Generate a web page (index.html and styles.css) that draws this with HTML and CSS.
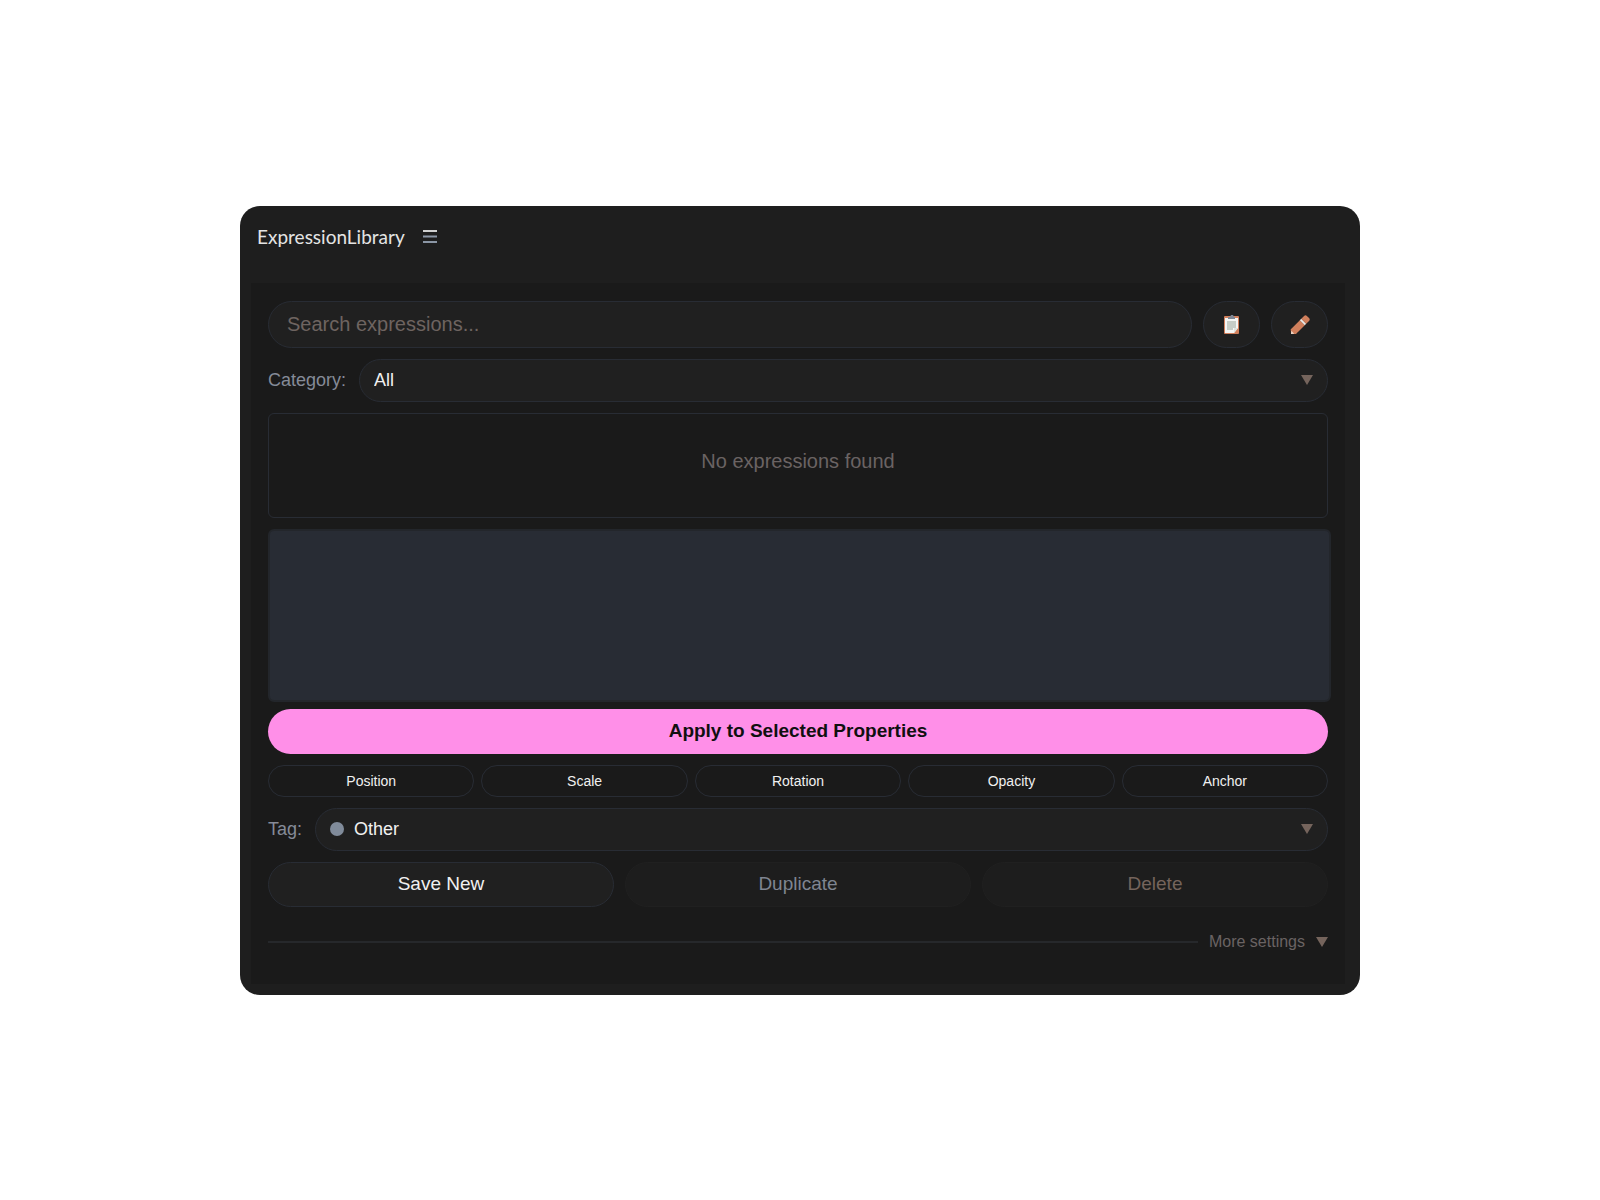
FILE: index.html
```html
<!DOCTYPE html>
<html lang="en">
  <head>
    <meta charset="UTF-8">
    <meta name="viewport" content="width=device-width, initial-scale=1">
    <title>ExpressionLibrary</title>
    <link rel="stylesheet" href="styles.css">
  </head>
  <body>
    <main class="panel">
      <div class="header">
        <h1>ExpressionLibrary</h1>
        <button class="menu-btn" type="button" aria-label="Panel menu">
          <svg width="14" height="14" viewBox="0 0 14 14">
            <path d="M0 2h14" stroke="#d0d0d0" stroke-width="2"/>
            <path d="M0 7.500h14M0 13h14" stroke="#8b96a5" stroke-width="2"/>
          </svg>
        </button>
      </div>

      <div class="content">
        <!-- Search -->
        <div class="row search-row">
          <input class="search" type="text" placeholder="Search expressions..." aria-label="Search expressions">
          <button class="icon-btn" type="button" aria-label="Copy">
            <svg width="16" height="20" viewBox="0 0 16 20">
              <rect x="0" y="2" width="15" height="18" rx="1" fill="#d07f5c"/>
              <path d="M1 4h13v10l-4 5H1z" fill="#f4f6f4"/>
              <path d="M3 7h9v7h-3v2H3z" fill="#c6cdc7"/>
              <path d="M10 19v-5h4z" fill="#dfe4e0"/>
              <path d="M4 3h2l1-2h2l1 2h1v2H4z" fill="#7d8694"/>
            </svg>
          </button>
          <button class="icon-btn" type="button" aria-label="Edit">
            <svg width="20" height="20" viewBox="0 0 20 20">
              <g transform="translate(1 20) rotate(-45)">
                <path d="M0 0l5-3.500v7z" fill="#f0d9c8"/>
                <path d="M3 -3.500h13v7H3L1.500 1.500v-3z" fill="#d07f5c"/>
                <path d="M0 0l2.500-2v4z" fill="#f0d9c8"/>
                <path d="M16 -3.500h2v7h-2z" fill="#f0ebe6"/>
                <path d="M18 -3.500h4q2 0 2 2v3q0 2-2 2h-4z" fill="#d07f5c"/>
              </g>
            </svg>
          </button>
        </div>

        <!-- Category filter -->
        <div class="row select-row">
          <label for="category">Category:</label>
          <div class="select">
            <select id="category">
              <option>All</option>
            </select>
            <span class="arrow"></span>
          </div>
        </div>

        <div class="list">No expressions found</div>

        <!-- Expression code -->
        <textarea class="editor" aria-label="Expression code"></textarea>

        <button class="apply" type="button">Apply to Selected Properties</button>

        <div class="row props">
          <button type="button">Position</button>
          <button type="button">Scale</button>
          <button type="button">Rotation</button>
          <button type="button">Opacity</button>
          <button type="button">Anchor</button>
        </div>

        <div class="row select-row">
          <label for="tag">Tag:</label>
          <div class="select tag">
            <select id="tag">
              <option>Other</option>
            </select>
            <span class="dot"></span>
            <span class="arrow"></span>
          </div>
        </div>

        <div class="row actions">
          <button class="save" type="button">Save New</button>
          <button class="duplicate" type="button" disabled>Duplicate</button>
          <button class="delete" type="button" disabled>Delete</button>
        </div>

        <div class="row more">
          <span class="line"></span>
          <button type="button">More settings <span class="triangle"></span></button>
        </div>
      </div>
    </main>
  </body>
</html>
```
FILE: styles.css
```css
* {
  box-sizing: border-box;
}
body {
  margin: 0;
  min-height: 100vh;
  display: flex;
  align-items: center;
  justify-content: center;
  background: #fff;
  color: #f0f0f0;
  font-family: "Liberation Sans", Arial, sans-serif;
  font-size: 18px;
}
button, input, select, textarea {
  margin: 0;
  font-family: inherit;
  color: inherit;
}
button {
  padding: 0;
  border: 1px solid #282c34;
  background: none;
}
.panel {
  width: 70%;
  padding: 0 15px 11px 11px;
  border-radius: 20px;
  background: #1e1e1e;
}
.header {
  display: flex;
  align-items: center;
  gap: 18px;
  height: 77px;
  padding: 0 6px 16px;
}
.header h1 {
  margin: 0;
  color: #e4e4e4;
  font-family: Lato, sans-serif;
  font-size: 19px;
  font-weight: normal;
}
.menu-btn {
  display: flex;
  border: none;
}
.content {
  display: flex;
  flex-direction: column;
  gap: 11px;
  padding: 18px 17px 31px;
  background: #1a1a1a;
}
.row {
  display: flex;
  align-items: center;
  gap: 11px;
}

/* Search */
.search {
  flex: 1;
  min-width: 0;
  height: 47px;
  padding: 0 18px;
  border: 1px solid #282c34;
  border-radius: 24px;
  background: #202020;
  font-size: 20px;
}
.search::placeholder {
  color: #6e6460;
  opacity: 1;
}
.icon-btn {
  display: flex;
  align-items: center;
  justify-content: center;
  width: 57px;
  height: 47px;
  border-radius: 24px;
  background: #202020;
}

/* Dropdowns */
.select-row {
  gap: 13px;
}
.select-row label {
  color: #858b98;
}
.select {
  position: relative;
  flex: 1;
}
.select select {
  display: block;
  width: 100%;
  height: 43px;
  padding: 0 40px 0 14px;
  border: 1px solid #282c34;
  border-radius: 22px;
  background: #202020;
  font-size: 18px;
  appearance: none;
}
.tag select {
  padding-left: 38px;
}
.arrow, .triangle {
  border: solid transparent;
  border-width: 10px 6px 0;
  border-top-color: #75645c;
}
.arrow {
  position: absolute;
  top: 16px;
  right: 15px;
  pointer-events: none;
}
.dot {
  position: absolute;
  top: 14px;
  left: 15px;
  width: 14px;
  height: 14px;
  border-radius: 50%;
  background: #808b9a;
}

.list {
  height: 105px;
  padding-top: 35px;
  border: 1px solid #282c34;
  border-radius: 6px;
  color: #6a6363;
  font-size: 20px;
  line-height: 24px;
  text-align: center;
}
/* the editor is a little wider than the column */
.editor {
  display: block;
  width: calc(100% + 3px);
  height: 173px;
  margin-bottom: -4px;
  padding: 12px;
  border: 2px solid #23262b;
  border-radius: 6px;
  background: #282c34;
  resize: none;
}

/* Buttons */
.apply {
  height: 45px;
  border: none;
  border-radius: 23px;
  background: #ff8fe8;
  color: #101010;
  font-size: 19px;
  font-weight: bold;
}
.props {
  gap: 7px;
}
.props button {
  flex: 1;
  height: 32px;
  border-radius: 16px;
  font-size: 14px;
}
.actions button {
  flex: 1;
  height: 45px;
  border-color: #202020;
  border-radius: 23px;
  background: #1d1d1d;
  font-size: 19px;
}
.actions .save {
  border-color: #282c34;
  background: #202020;
}
.actions .duplicate {
  color: #7f8591;
}
.actions .delete {
  color: #75645c;
}

.more {
  padding-top: 13px;
}
.line {
  flex: 1;
  height: 2px;
  background: #26282b;
}
.more button {
  display: flex;
  align-items: center;
  gap: 11px;
  border: none;
  color: #6a6363;
  font-size: 16px;
  line-height: 22px;
}
```
